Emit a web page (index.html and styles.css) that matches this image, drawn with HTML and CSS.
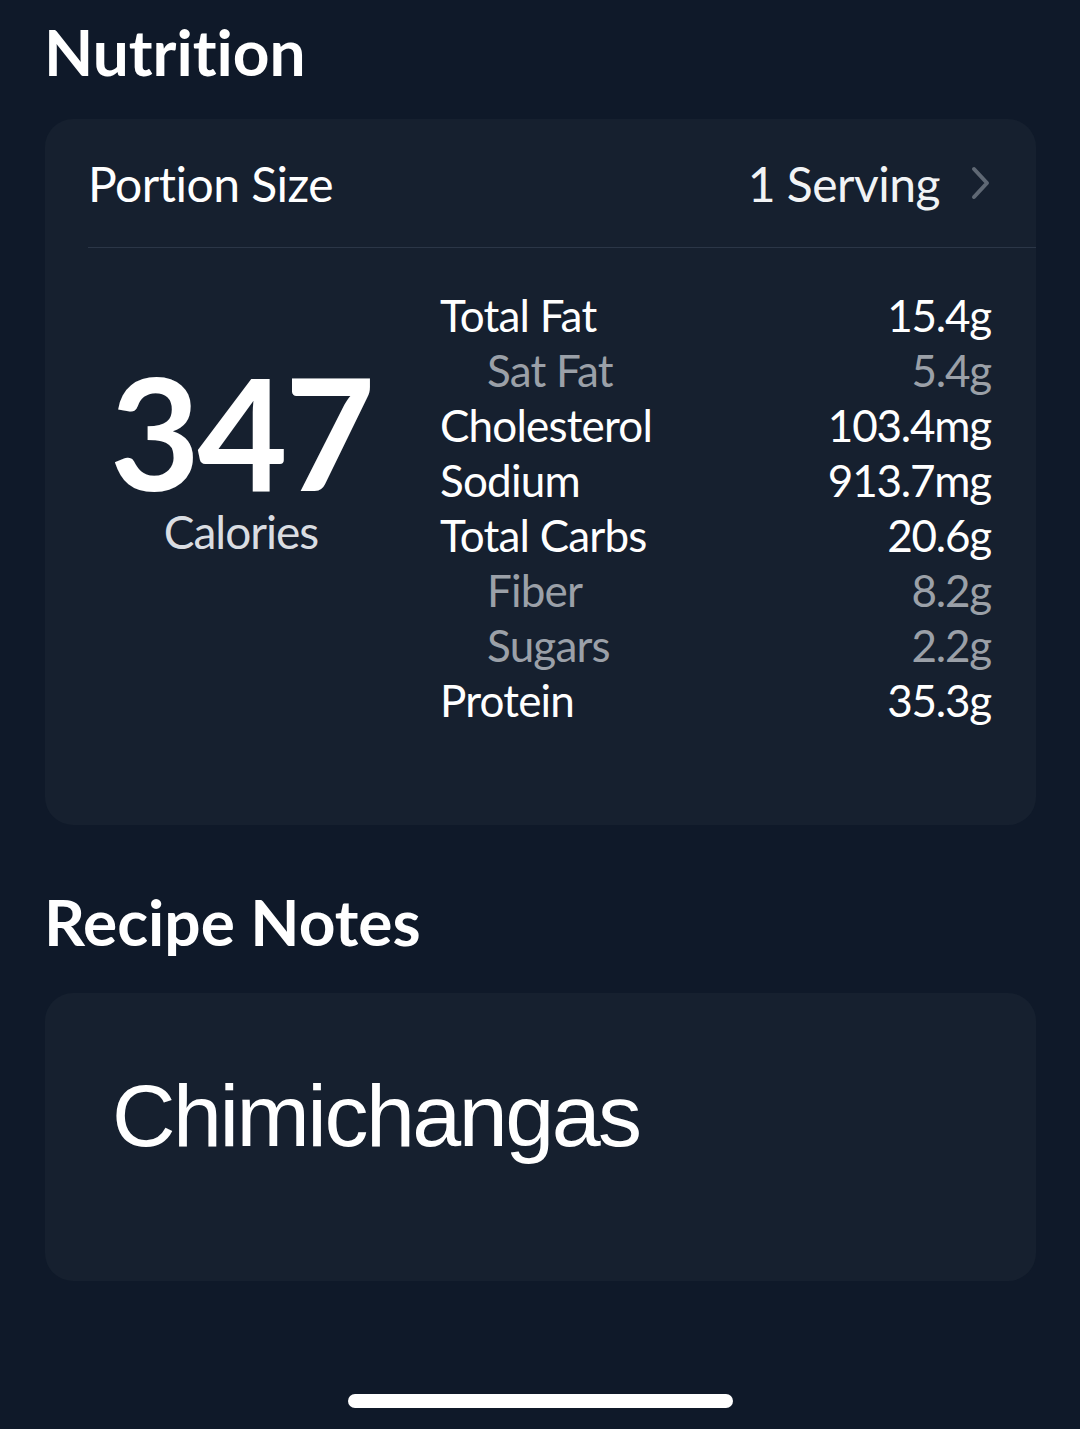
FILE: index.html
```html
<!DOCTYPE html>
<html lang="en">
<head>
    <meta charset="UTF-8">
    <meta name="viewport" content="width=device-width, initial-scale=1.0">
    <title>Nutrition</title>
    <link rel="stylesheet" href="styles.css">
</head>
<body>
    <div class="page">
        <h1 class="section-title">Nutrition</h1>

        <!-- Nutrition card -->
        <div class="card nutrition">
            <div class="portion-row">
                <span class="portion-label">Portion Size</span>
                <span class="portion-value">
                    1 Serving
                    <svg class="chevron" width="22" height="36" viewBox="0 0 22 36">
                        <path d="M4 4 L17 18 L4 32" fill="none" stroke="currentColor" stroke-width="4" stroke-linecap="round" stroke-linejoin="round"/>
                    </svg>
                </span>
            </div>

            <div class="nutrition-body">
                <div class="calories">
                    <div class="calories-number">347</div>
                    <div class="calories-label">Calories</div>
                </div>

                <div class="facts">
                    <div class="fact"><span>Total Fat</span><span class="amount">15.4g</span></div>
                    <div class="fact sub"><span>Sat Fat</span><span class="amount">5.4g</span></div>
                    <div class="fact"><span>Cholesterol</span><span class="amount">103.4mg</span></div>
                    <div class="fact"><span>Sodium</span><span class="amount">913.7mg</span></div>
                    <div class="fact"><span>Total Carbs</span><span class="amount">20.6g</span></div>
                    <div class="fact sub"><span>Fiber</span><span class="amount">8.2g</span></div>
                    <div class="fact sub"><span>Sugars</span><span class="amount">2.2g</span></div>
                    <div class="fact"><span>Protein</span><span class="amount">35.3g</span></div>
                </div>
            </div>
        </div>

        <h1 class="section-title notes-title">Recipe Notes</h1>

        <!-- Notes card -->
        <div class="card notes">
            <p class="notes-text">Chimichangas</p>
        </div>

        <div class="home-indicator"></div>
    </div>
</body>
</html>
```

FILE: styles.css
```css
body {
    margin: 0;
    padding: 0;
    background-color: #0f1929;
    color: #ffffff;
    font-family: Lato, "Noto Sans", sans-serif;
    font-variant-ligatures: none;
}
.page {
    padding: 13px 44px 0 45px;
    height: 1416px;
    box-sizing: border-box;
}
.section-title {
    margin: 0 0 0 -1px;
    font-size: 64px;
    font-weight: 700;
    line-height: 77px;
}
.card {
    background-color: #16202f;
    border-radius: 28px;
}
.nutrition {
    margin-top: 29px;
    padding-bottom: 97px;
}
/* Portion row */
.portion-row {
    height: 128px;
    margin-left: 43px;
    padding-right: 44px;
    display: flex;
    align-items: center;
    justify-content: space-between;
    border-bottom: 1px solid #2b3647;
    font-size: 48px;
    letter-spacing: -0.5px;
}
.portion-value {
    display: flex;
    align-items: center;
    gap: 30px;
    color: #f1f3f5;
}
.chevron {
    color: #5f6874;
}
/* Calories + facts */
.nutrition-body {
    display: grid;
    grid-template-columns: 306px 1fr;
    gap: 46px;
    padding: 40px 45px 0 43px;
}
.calories {
    text-align: center;
    padding-top: 73px;
}
.calories-number {
    font-size: 156px;
    font-weight: 700;
    line-height: 140px;
    letter-spacing: -3px;
}
.calories-label {
    font-size: 46px;
    line-height: 46px;
    color: #dadde2;
    margin-top: 8px;
    letter-spacing: -1px;
}
.fact {
    display: flex;
    justify-content: space-between;
    font-size: 44px;
    line-height: 55px;
    letter-spacing: -0.8px;
}
.fact .amount {
    letter-spacing: -1.2px;
}
.fact.sub {
    color: #9ba0a8;
    padding-left: 47px;
}
/* Notes */
.notes-title {
    margin-top: 58px;
}
.notes {
    margin-top: 33px;
    height: 288px;
    box-sizing: border-box;
    padding: 72px 67px 0;
}
.notes-text {
    margin: 0;
    font-family: "Liberation Sans", Arial, sans-serif;
    font-size: 88px;
    letter-spacing: -2.5px;
}
.home-indicator {
    width: 385px;
    height: 14px;
    border-radius: 7px;
    background-color: #ffffff;
    margin: 113px auto 0;
}
```
